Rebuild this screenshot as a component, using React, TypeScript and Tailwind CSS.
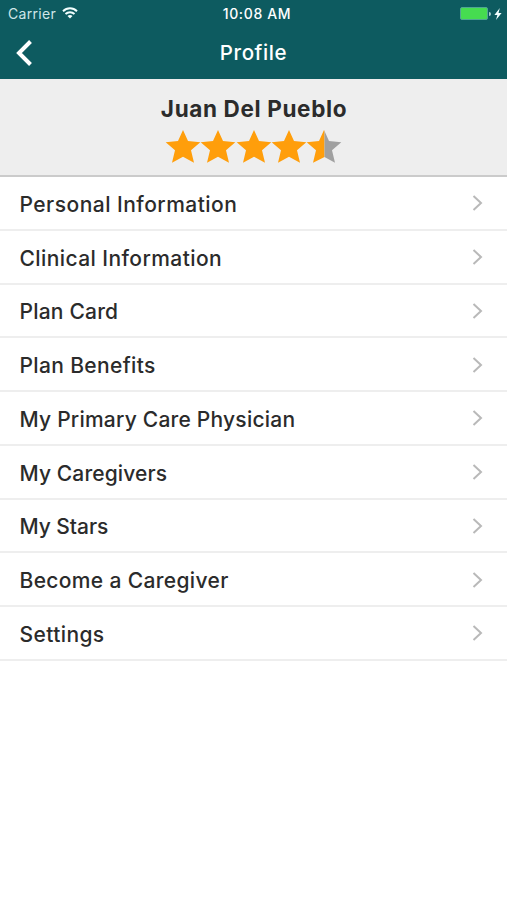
import React from 'react';

interface MenuItem {
  label: string;
  tracking: string;
}

const menuItems: MenuItem[] = [
  { label: 'Personal Information', tracking: 'tracking-[0.47px]' },
  { label: 'Clinical Information', tracking: 'tracking-[0.42px]' },
  { label: 'Plan Card', tracking: 'tracking-[0.2px]' },
  { label: 'Plan Benefits', tracking: 'tracking-[0.35px]' },
  { label: 'My Primary Care Physician', tracking: 'tracking-[0.22px]' },
  { label: 'My Caregivers', tracking: 'tracking-[0.12px]' },
  { label: 'My Stars', tracking: 'tracking-[-0.05px]' },
  { label: 'Become a Caregiver', tracking: 'tracking-[0.35px]' },
  { label: 'Settings', tracking: 'tracking-[0.4px]' },
];

const STAR_POINTS = '17,0 22,11 34.3,12.2 25,20.2 28,32.8 17,26.7 6,32.8 9,20.2 -0.3,12.2 12,11';

const Star: React.FC<{ half?: boolean }> = ({ half = false }) => (
  <svg className="h-[33px] w-[34px] overflow-visible" viewBox="0 0 34 33">
    {half ? (
      <>
        <polygon points="17.5,1 17.5,27 6,32.8 9,20.2 -0.3,12.2 12,11 17,0" fill="#ff9e0b" />
        <polygon points="17.5,1 22,11 34.3,12.2 25,20.2 28,32.8 17.5,27" fill="#a0a0a0" />
      </>
    ) : (
      <polygon points={STAR_POINTS} fill="#ff9e0b" />
    )}
  </svg>
);

const StatusBar: React.FC = () => (
  <div className="grid h-[27px] grid-cols-3 items-center leading-none text-white">
    <div className="flex items-center pl-[8px] text-[#cfe6e8]">
      <span className="text-[14px] tracking-[0.3px]">Carrier</span>
      <svg className="mb-[2px] ml-[6px] h-[12px] w-[16px]" viewBox="0 0 16 12" fill="none" stroke="#f2ffff" strokeWidth="1.9">
        <path d="M1 4.2C5 0.3 11 0.3 15 4.2" />
        <path d="M3.5 7C6 4.6 10 4.6 12.5 7" />
        <path d="M5.5 9.1C7 7.7 9 7.7 10.5 9.1L8 11.6Z" fill="#f2ffff" stroke="none" />
      </svg>
    </div>
    <div className="pt-px pl-[7px] text-center text-[14px] font-medium tracking-[0.65px] whitespace-nowrap">10:08 AM</div>
    <div className="flex items-center justify-end pr-[5px]">
      <div className="h-[13px] w-[28px] rounded-[2px] border border-[#4fa593] bg-[#46dc50]" />
      <div className="ml-px h-[4px] w-[2px] rounded-r-full bg-[#a8cccd]" />
      <svg className="ml-[3px] h-[12px] w-[8px]" viewBox="0 0 8 12" fill="#f2ffff">
        <path d="M5.8 0 0.4 6.9h3L2 12 7.6 4.9H4.5Z" />
      </svg>
    </div>
  </div>
);

const App: React.FC = () => {
  return (
    <div className="min-h-[900px] w-full bg-white font-['Inter',sans-serif] text-[#2b2b2b]">
      <header className="h-[79px] bg-[#0d5b60] text-white">
        <StatusBar />
        <div className="grid h-[51px] grid-cols-3 items-center">
          <button type="button" aria-label="Back" className="pl-[15px]">
            <svg className="h-[26px] w-[18px]" viewBox="0 0 18 26" fill="none" stroke="white" strokeWidth="4">
              <path d="M15.5 1.5 4 13 15.5 24.5" />
            </svg>
          </button>
          <h1 className="pt-[2px] text-center text-[20.5px] leading-none font-medium tracking-[0.6px]">Profile</h1>
        </div>
      </header>

      {/* Name and rating */}
      <section className="flex h-[98px] flex-col items-center border-b-2 border-[#cbcbcb] bg-[#eeeeee] pt-[18px]">
        <h2 className="pl-[1px] text-[22.5px] leading-[24px] font-bold tracking-[0.64px]">Juan Del Pueblo</h2>
        <div className="mt-[8.5px] flex gap-[1.4px]">
          <Star />
          <Star />
          <Star />
          <Star />
          <Star half />
        </div>
      </section>

      <ul>
        {menuItems.map(item => (
          <li
            key={item.label}
            className="flex h-[53.75px] items-center justify-between border-b-2 border-[#eeeeee] pr-[24px] pl-[19.5px]"
          >
            <span className={`pt-[3px] text-[21px] leading-none font-medium whitespace-nowrap ${item.tracking}`}>
              {item.label}
            </span>
            <svg className="mt-px h-[16px] w-[11px]" viewBox="0 0 11 16" fill="none" stroke="#b9b9b9" strokeWidth="2">
              <path d="M1.5 1 9 8 1.5 15" />
            </svg>
          </li>
        ))}
      </ul>
    </div>
  );
};

export default App;
